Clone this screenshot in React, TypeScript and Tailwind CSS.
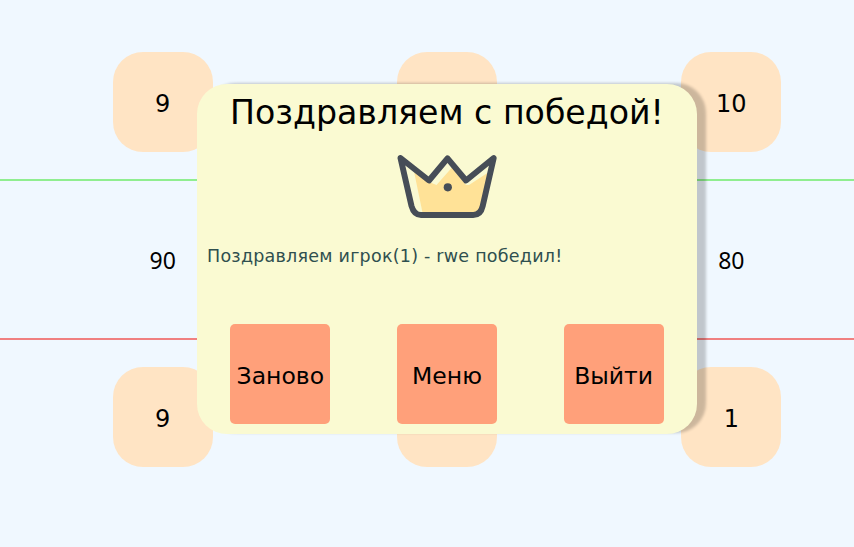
const tileBase = 'flex h-[100px] w-[100px] items-center justify-center rounded-[30px] bg-[#ffe4c4] pt-1';

function Tile({ value }: { value?: string }) {
  return (
    <div className="flex justify-center">
      <div className={tileBase}>{value}</div>
    </div>
  );
}

function Crown() {
  return (
    <svg className="block h-[70px] w-[100px]" viewBox="17 13 100 70" fill="none">
      <path d="M33.5 29 49 42l7.500 3L72 27.500 86 45l3 0 23-15-8 38q-2 6-8 7H43z" fill="#ffe297" />
      <path
        d="M20.5 18 49 40.5 67.5 18.3 86 40.5 113.7 18l-11 48q-2 9-9.500 9H41q-7 0-9.500-9z"
        stroke="#464d57"
        strokeWidth="5.900"
        strokeLinejoin="round"
      />
      <circle cx="67.800" cy="47.300" r="4.100" fill="#464d57" />
    </svg>
  );
}

function ActionButton({ label }: { label: string }) {
  return (
    <button className="h-[100px] w-[100px] whitespace-nowrap rounded-[5px] bg-[#ffa07a] pt-1 text-[23.500px] text-black">
      {label}
    </button>
  );
}

export default function App() {
  return (
    <div className="relative h-[547px] w-full overflow-hidden bg-[#f0f8ff] font-['DejaVu_Sans',sans-serif] text-2xl text-black">
      <div className="flex h-full w-[873.5px] flex-col">
        <div className="grid h-[179px] grid-cols-3 pl-[20.5px] pt-[52px]">
          <Tile value="9" />
          <Tile />
          <Tile value="10" />
        </div>
        <div className="grid h-[161px] grid-cols-3 items-center border-y-2 border-t-[#90ee90] border-b-[#f08080] pl-[20.5px] pt-0.5 text-center font-['Noto_Sans',sans-serif] text-[23px]">
          <span>90</span>
          <span />
          <span>80</span>
        </div>
        <div className="grid grid-cols-3 pl-[20.5px] pt-[27px]">
          <Tile value="9" />
          <Tile />
          <Tile value="1" />
        </div>
      </div>
      <div className="absolute left-[197px] top-[84px] flex h-[350px] w-[500px] flex-col rounded-[30px] bg-[#fafad2] shadow-[9px_-1px_3px_rgba(0,0,0,0.2)]">
        <h1 className="flex h-[55px] scale-x-[0.962] items-center justify-center whitespace-nowrap text-[34.5px]">Поздравляем с победой!</h1>
        <div className="mt-[14px] flex h-[70px] justify-center">
          <Crown />
        </div>
        <p className="mt-[20px] h-[30px] whitespace-nowrap pl-2.5 text-[17.500px] leading-[26px] tracking-[0.240px] text-[#2f4f4f]">
          Поздравляем игрок(1) - rwe победил!
        </p>
        <div className="mt-auto mb-[9.6px] flex justify-around">
          <ActionButton label="Заново" />
          <ActionButton label="Меню" />
          <ActionButton label="Выйти" />
        </div>
      </div>
    </div>
  );
}
